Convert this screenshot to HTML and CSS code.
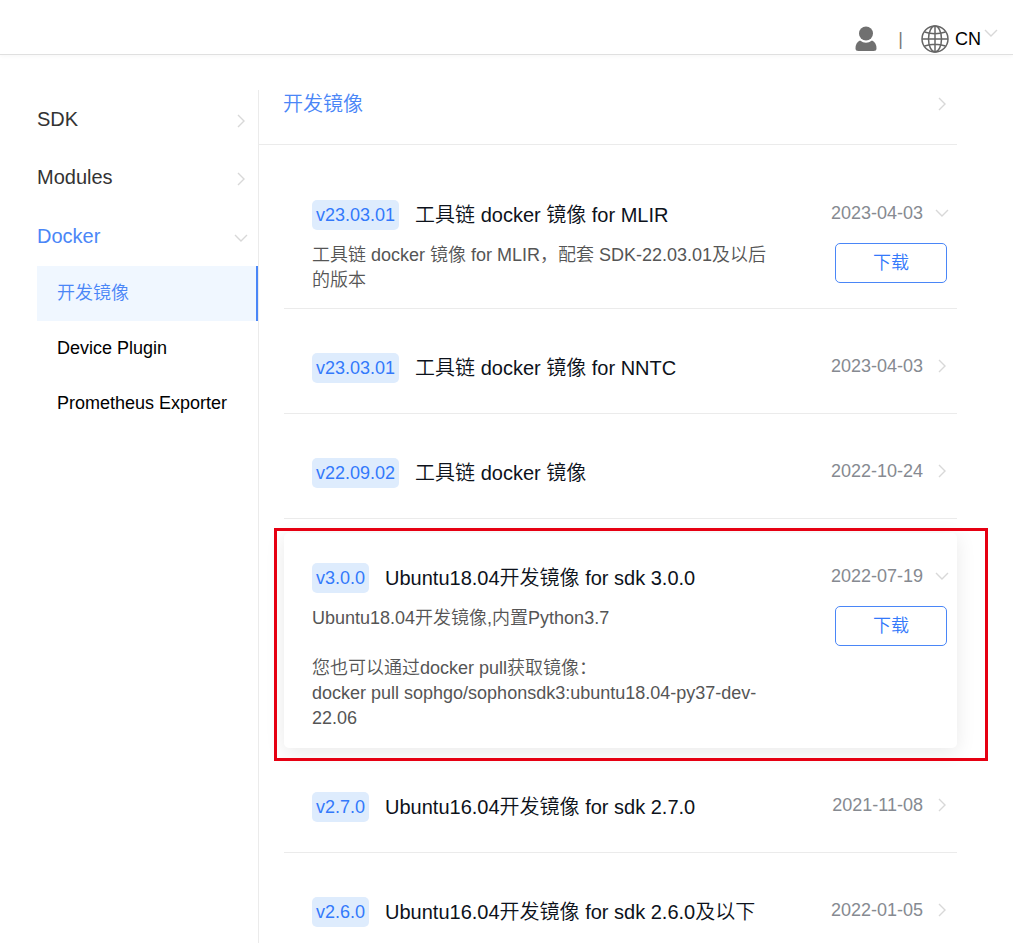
FILE: index.html
```html
<!DOCTYPE html>
<html lang="zh-CN">
<head>
<meta charset="utf-8">
<meta name="viewport" content="width=device-width, initial-scale=1">
<title>开发镜像</title>
<link rel="stylesheet" href="styles.css">
</head>
<body>
<svg class="defs" aria-hidden="true">
  <symbol id="right" viewBox="0 0 14 14"><path d="M4 1 10 7 4 13"/></symbol>
  <symbol id="down" viewBox="0 0 14 14"><path d="M1 4 7 10 13 4"/></symbol>
</svg>
<header class="topbar">
  <button class="plain" type="button" aria-label="用户">
    <svg class="user" viewBox="0 0 22 26"><circle cx="11" cy="7.5" r="7"/><path d="M5 14.5Q11 19 17 14.5Q21.5 16.5 21.5 22.5Q21.5 25 18.5 25H3.500Q.5 25 .5 22.500Q.5 16.500 5 14.500Z"/></svg>
  </button>
  <span class="divider">|</span>
  <button class="plain lang" type="button">
    <svg class="globe" viewBox="0 0 28 28"><circle cx="14" cy="14" r="13"/><ellipse cx="14" cy="14" rx="6.500" ry="13"/><path d="M14 1V27M1 14H27M3.500 7Q14 10.500 24.500 7M3.500 21Q14 17.500 24.500 21"/></svg>
    <span>CN</span>
    <svg class="chevron lang-arrow"><use href="#down"/></svg>
  </button>
</header>
<div class="layout">
  <nav class="sidebar">
    <a class="group" href="#sdk">SDK<svg class="chevron"><use href="#right"/></svg></a>
    <a class="group" href="#modules">Modules<svg class="chevron"><use href="#right"/></svg></a>
    <a class="group active" href="#docker">Docker<svg class="chevron"><use href="#down"/></svg></a>
    <a class="sub current" href="#images">开发镜像</a>
    <a class="sub" href="#plugin">Device Plugin</a>
    <a class="sub" href="#exporter">Prometheus Exporter</a>
  </nav>
  <main class="content">
    <div class="heading"><h1>开发镜像</h1><svg class="chevron"><use href="#right"/></svg></div>
    <div class="list">
      <article class="item open">
        <div class="info">
          <div class="title"><span class="tag">v23.03.01</span><h2>工具链 docker 镜像 for MLIR</h2></div>
          <p>工具链 docker 镜像 for MLIR，配套 SDK-22.03.01及以后的版本</p>
        </div>
        <div class="side">
          <div class="date"><time>2023-04-03</time><svg class="chevron"><use href="#down"/></svg></div>
          <button class="download" type="button">下载</button>
        </div>
      </article>
      <article class="item">
        <div class="info"><div class="title"><span class="tag">v23.03.01</span><h2>工具链 docker 镜像 for NNTC</h2></div></div>
        <div class="side"><div class="date"><time>2023-04-03</time><svg class="chevron"><use href="#right"/></svg></div></div>
      </article>
      <article class="item">
        <div class="info"><div class="title"><span class="tag">v22.09.02</span><h2>工具链 docker 镜像</h2></div></div>
        <div class="side"><div class="date"><time>2022-10-24</time><svg class="chevron"><use href="#right"/></svg></div></div>
      </article>
      <article class="item open raised">
        <div class="info">
          <div class="title"><span class="tag">v3.0.0</span><h2>Ubuntu18.04开发镜像 for sdk 3.0.0</h2></div>
          <p>Ubuntu18.04开发镜像,内置Python3.7<br><br>您也可以通过docker pull获取镜像：<br>docker pull sophgo/sophonsdk3:ubuntu18.04-py37-dev-22.06</p>
        </div>
        <div class="side">
          <div class="date"><time>2022-07-19</time><svg class="chevron"><use href="#down"/></svg></div>
          <button class="download" type="button">下载</button>
        </div>
      </article>
      <article class="item">
        <div class="info"><div class="title"><span class="tag">v2.7.0</span><h2>Ubuntu16.04开发镜像 for sdk 2.7.0</h2></div></div>
        <div class="side"><div class="date"><time>2021-11-08</time><svg class="chevron"><use href="#right"/></svg></div></div>
      </article>
      <article class="item">
        <div class="info"><div class="title"><span class="tag">v2.6.0</span><h2>Ubuntu16.04开发镜像 for sdk 2.6.0及以下</h2></div></div>
        <div class="side"><div class="date"><time>2022-01-05</time><svg class="chevron"><use href="#right"/></svg></div></div>
      </article>
    </div>
  </main>
</div>
</body>
</html>
```
FILE: styles.css
```css
* { box-sizing: border-box; }
html { height: 100%; overflow: hidden; }
body {
  height: 100%;
  margin: 0;
  display: flex;
  flex-direction: column;
  overflow: hidden;
  background: #fff;
  color: #000;
  font: 350 18px/25px "Liberation Sans", "Noto Sans CJK SC", sans-serif;
}
h1, h2, p { margin: 0; font-weight: inherit; }
a { color: inherit; text-decoration: none; }
button { font: inherit; cursor: pointer; }
.defs { position: absolute; width: 0; height: 0; }
.chevron {
  flex: none;
  width: 14px;
  height: 14px;
  fill: none;
  stroke: #d8d8d8;
  stroke-width: 1.4;
}

.topbar {
  flex: none;
  display: flex;
  justify-content: flex-end;
  align-items: center;
  height: 55px;
  padding: 24px 15px 0 0;
  border-bottom: 1px solid #e0e0e0;
  box-shadow: 0 1px 4px rgba(0, 0, 0, .04);
}
.plain { display: flex; align-items: center; padding: 0; border: 0; background: none; color: #000; }
.user { width: 22px; height: 26px; fill: #707070; }
.divider { margin: 0 18px 0 21px; color: #777; }
.globe { width: 28px; height: 28px; fill: none; stroke: #666; stroke-width: 1.5; }
.lang { gap: 6px; }
.lang-arrow { align-self: flex-start; margin: 1px 0 0 -3px; }

.layout { flex: 1; display: flex; min-height: 0; padding-top: 35px; }
.sidebar {
  flex: none;
  width: 259px;
  padding-left: 37px;
  border-right: 1px solid #ebebeb;
}
.group {
  display: flex;
  align-items: center;
  justify-content: space-between;
  height: 59px;
  padding-right: 10px;
  color: #333;
  font-size: 20px;
}
.group:first-child { height: 58px; }
.group .chevron { margin-top: 3px; }
.group.active { color: #4a86f7; }
.sub { display: flex; align-items: center; height: 55px; padding-left: 20px; }
.sub.current { border-right: 2px solid #4a86f7; background: #f0f7ff; color: #4a86f7; }

.content { flex: 1; min-width: 0; margin-right: 56px; }
.heading {
  display: flex;
  align-items: center;
  justify-content: space-between;
  height: 55px;
  padding: 0 8px 26px 24px;
  border-bottom: 1px solid #ebebeb;
  color: #4a86f7;
}
.heading h1 { font-size: 20px; }
.list { padding: 11px 0 0 25px; }
.item {
  display: flex;
  justify-content: space-between;
  margin-top: 14px;
  padding: 30px 8px 30px 28px;
  border-bottom: 1px solid #ebebeb;
}
.item.open { padding-bottom: 15px; }
.info { flex: 0 1 460px; min-width: 0; }
.title { display: flex; align-items: center; gap: 16px; height: 30px; white-space: nowrap; }
.title h2 { color: #0d121b; font-size: 20px; }
.tag {
  padding: 0 4px;
  border-radius: 5px;
  background: #deecfd;
  color: #3379fb;
  line-height: 30px;
}
.info p { margin-top: 13px; color: #555; }
.side { flex: none; display: flex; flex-direction: column; align-items: flex-end; }
.date { display: flex; align-items: center; gap: 12px; height: 26px; color: #868a91; }
.download {
  width: 112px;
  height: 40px;
  margin: 17px 2px 0 0;
  padding: 0;
  border: 1px solid #4a86f7;
  border-radius: 5px;
  background: #fff;
  color: #3379fb;
}

.item.raised {
  position: relative;
  padding-bottom: 17px;
  border-bottom: 0;
  border-radius: 5px;
  box-shadow: 0 4px 20px rgba(0, 0, 0, .09);
}
.raised::after {
  content: "";
  position: absolute;
  inset: -5px -31px -13px -10px;
  border: 3px solid #e60012;
  pointer-events: none;
}
```
